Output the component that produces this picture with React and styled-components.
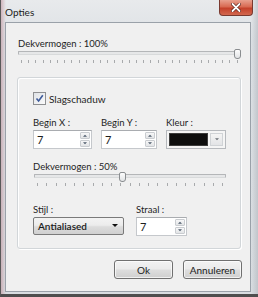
import styled, { createGlobalStyle } from 'styled-components';

const GlobalStyle = createGlobalStyle`
  html, body {
    margin: 0;
    padding: 0;
    background: #6b6b6b;
  }
  body {
    font-family: Lato, "Noto Sans", sans-serif;
    font-size: 9.5px;
    color: #1e1e1e;
  }
`;

const Window = styled.div`
  width: 258px;
  height: 297px;
  box-sizing: border-box;
  display: flex;
  flex-direction: column;
  border-left: 1px solid #5a5a5a;
  border-bottom: 3px solid #4e4e4e;
  background: linear-gradient(
      90deg,
      rgba(190, 140, 150, 0.55) 0px,
      rgba(215, 220, 226, 0) 5px,
      rgba(215, 220, 226, 0) 250px,
      rgba(170, 175, 182, 0.6) 258px
    ),
    linear-gradient(180deg, #e8eaec 0px, #dde1e5 40px, #d9dde1 100%);
`;

const TitleBar = styled.div`
  height: 22px;
  display: flex;
  justify-content: space-between;
  align-items: flex-start;
  flex-shrink: 0;
`;

const Title = styled.span`
  margin: 6px 0 0 4px;
  font-size: 10px;
  color: #1a1a1a;
`;

const CloseButton = styled.div`
  width: 34px;
  height: 16px;
  margin-right: 5px;
  box-sizing: border-box;
  border: 1px solid #7a3a30;
  border-top: none;
  border-radius: 0 0 4px 4px;
  background: linear-gradient(180deg, #e8a08e 0%, #d86a52 45%, #c4412a 55%, #d2684f 100%);
  display: flex;
  align-items: center;
  justify-content: center;
`;

const Client = styled.div`
  flex: 1;
  margin: 0 7px 2px 4px;
  border: 1px solid #9aa1a9;
  background: #f0f0f0;
  padding: 14px 8px 0 11px;
  display: flex;
  flex-direction: column;
`;

const Label = styled.div`
  height: 14px;
  line-height: 14px;
  margin-left: ${(p) => p.$indent || 0}px;
  margin-top: ${(p) => p.$top || 0}px;
  white-space: nowrap;
`;

const SliderWrap = styled.div`
  position: relative;
  width: ${(p) => p.$width}px;
  height: ${(p) => p.$height || 26}px;
  margin-left: 1px;
`;

const Track = styled.div`
  height: 2px;
  border: 1px solid #b4b6b8;
  border-bottom-color: #d8dadb;
  background: #e6e7e8;
  border-radius: 1px;
`;

const Thumb = styled.div`
  position: absolute;
  top: -2px;
  width: 5px;
  height: 8px;
  border: 1px solid #8a8d90;
  border-radius: 2px 2px 3px 3px;
  background: linear-gradient(180deg, #fdfdfd, #e1e3e5);
`;

const Ticks = styled.div`
  display: flex;
  justify-content: space-between;
  margin-top: 5px;
  padding: 0 3px;
`;

const Tick = styled.span`
  width: 1px;
  height: 3px;
  background: #a8aaac;
`;

const Slider = ({ value, ticks, width, height }) => (
  <SliderWrap $width={width} $height={height}>
    <Track />
    <Thumb style={{ left: `${((width - 7) * value) / 100}px` }} />
    <Ticks>
      {Array.from({ length: ticks }).map((_, i) => (
        <Tick key={i} />
      ))}
    </Ticks>
  </SliderWrap>
);

const GroupBox = styled.div`
  width: 224px;
  box-sizing: border-box;
  height: 172px;
  border: 1px solid #d2d6d9;
  box-shadow: inset 1px 1px 0 #ffffff, 1px 1px 0 #ffffff;
  border-radius: 3px;
  padding: 14px 0 0 15px;
  display: flex;
  flex-direction: column;
`;

const CheckRow = styled.label`
  display: flex;
  align-items: center;
  gap: 3px;
  height: 13px;
  font-size: 10px;
`;

const CheckBox = styled.span`
  width: 11px;
  height: 11px;
  border: 1px solid #8f9092;
  background: linear-gradient(135deg, #dfe2e6, #fbfbfb);
  display: flex;
  align-items: center;
  justify-content: center;
`;

const FieldRow = styled.div`
  display: flex;
  gap: ${(p) => p.$gap || 9}px;
  margin-top: ${(p) => p.$top || 0}px;
`;

const Field = styled.div`
  display: flex;
  flex-direction: column;
`;

const SpinBox = styled.div`
  width: ${(p) => p.$width}px;
  height: 19px;
  box-sizing: border-box;
  border: 1px solid #c5c8cc;
  border-top-color: #a9acb0;
  background: #fff;
  display: flex;
  align-items: stretch;
`;

const SpinValue = styled.span`
  flex: 1;
  padding-left: 3px;
  line-height: 17px;
  font-size: 11px;
`;

const SpinButtons = styled.div`
  width: 10px;
  margin: 1px 1px 1px 0;
  display: flex;
  flex-direction: column;
  gap: 1px;
`;

const SpinButton = styled.div`
  flex: 1;
  border: 1px solid #c9ccd0;
  border-radius: 1px;
  background: linear-gradient(180deg, #f7f7f8, #e2e4e6);
  display: flex;
  align-items: center;
  justify-content: center;
`;

const Arrow = ({ up, size = 5, color = '#4d5a6a' }) => (
  <svg width={size} height={Math.ceil(size / 2) + 1} viewBox="0 0 6 4">
    <path d={up ? 'M0 4 L3 1 L6 4 Z' : 'M0 0 L3 3 L6 0 Z'} fill={color} />
  </svg>
);

const Spinner = ({ value, width }) => (
  <SpinBox $width={width}>
    <SpinValue>{value}</SpinValue>
    <SpinButtons>
      <SpinButton>
        <Arrow up size={4} />
      </SpinButton>
      <SpinButton>
        <Arrow size={4} />
      </SpinButton>
    </SpinButtons>
  </SpinBox>
);

const ColorPicker = styled.div`
  width: 60px;
  height: 19px;
  box-sizing: border-box;
  border: 1px solid #b6b9bd;
  background: #f5f5f5;
  display: flex;
  padding: 2px;
  gap: 2px;
`;

const Swatch = styled.div`
  flex: 1;
  background: #0e0e0e;
  border: 1px solid #3c3c3c;
`;

const ColorDrop = styled.div`
  width: 11px;
  border: 1px solid #d0d3d6;
  background: linear-gradient(180deg, #f4f4f4, #e3e4e6);
  display: flex;
  align-items: center;
  justify-content: center;
`;

const Combo = styled.div`
  width: 91px;
  height: 18px;
  box-sizing: border-box;
  border: 1px solid #7a7a7a;
  border-radius: 2px;
  background: linear-gradient(180deg, #f3f3f3 0%, #ececec 45%, #dcdcdc 55%, #d0d0d0 100%);
  display: flex;
  align-items: center;
  justify-content: space-between;
  padding: 0 5px 0 4px;
  font-size: 10px;
  font-weight: 600;
  color: #1b1b1b;
`;

const ButtonRow = styled.div`
  display: flex;
  justify-content: flex-end;
  gap: 10px;
  margin-top: 11px;
  width: 225px;
`;

const Button = styled.div`
  width: 59px;
  height: 19px;
  box-sizing: border-box;
  border: 1px solid #707070;
  border-radius: 3px;
  background: linear-gradient(180deg, #f2f2f2 0%, #ebebeb 45%, #dddddd 55%, #cfcfcf 100%);
  box-shadow: inset 0 0 0 1px rgba(255, 255, 255, 0.7);
  display: flex;
  align-items: center;
  justify-content: center;
  font-size: 10px;
  color: #1b1b1b;
`;

const App = () => (
  <>
    <GlobalStyle />
    <Window>
      <TitleBar>
        <Title>Opties</Title>
        <CloseButton>
          <svg width="10" height="9" viewBox="0 0 10 9">
            <path d="M1.5 1 L8.5 8 M8.5 1 L1.5 8" stroke="#5a2018" strokeWidth="3.2" strokeLinecap="round" />
            <path d="M1.5 1 L8.5 8 M8.5 1 L1.5 8" stroke="#ffffff" strokeWidth="1.8" strokeLinecap="round" />
          </svg>
        </CloseButton>
      </TitleBar>
      <Client>
        <Label $indent={1}>Dekvermogen : 100%</Label>
        <Slider value={100} ticks={31} width={223} />
        <GroupBox>
          <CheckRow>
            <CheckBox>
              <svg width="9" height="9" viewBox="0 0 9 9">
                <path d="M1.5 4.5 L3.6 7 L7.8 1.2" fill="none" stroke="#3d5a9a" strokeWidth="1.6" />
              </svg>
            </CheckBox>
            <span>Slagschaduw</span>
          </CheckRow>
          <FieldRow $top={11}>
            <Field>
              <Label>Begin X :</Label>
              <Spinner value="7" width={59} />
            </Field>
            <Field>
              <Label>Begin Y :</Label>
              <Spinner value="7" width={56} />
            </Field>
            <Field>
              <Label>Kleur :</Label>
              <ColorPicker>
                <Swatch />
                <ColorDrop>
                  <Arrow size={4} color="#6a6f76" />
                </ColorDrop>
              </ColorPicker>
            </Field>
          </FieldRow>
          <Label $top={11}>Dekvermogen : 50%</Label>
          <Slider value={46} ticks={21} width={192} height={29} />
          <FieldRow $gap={12}>
            <Field>
              <Label>Stijl :</Label>
              <Combo>
                <span>Antialiased</span>
                <Arrow size={6} color="#111" />
              </Combo>
            </Field>
            <Field>
              <Label>Straal :</Label>
              <Spinner value="7" width={51} />
            </Field>
          </FieldRow>
        </GroupBox>
        <ButtonRow>
          <Button>Ok</Button>
          <Button>Annuleren</Button>
        </ButtonRow>
      </Client>
    </Window>
  </>
);

export default App;
